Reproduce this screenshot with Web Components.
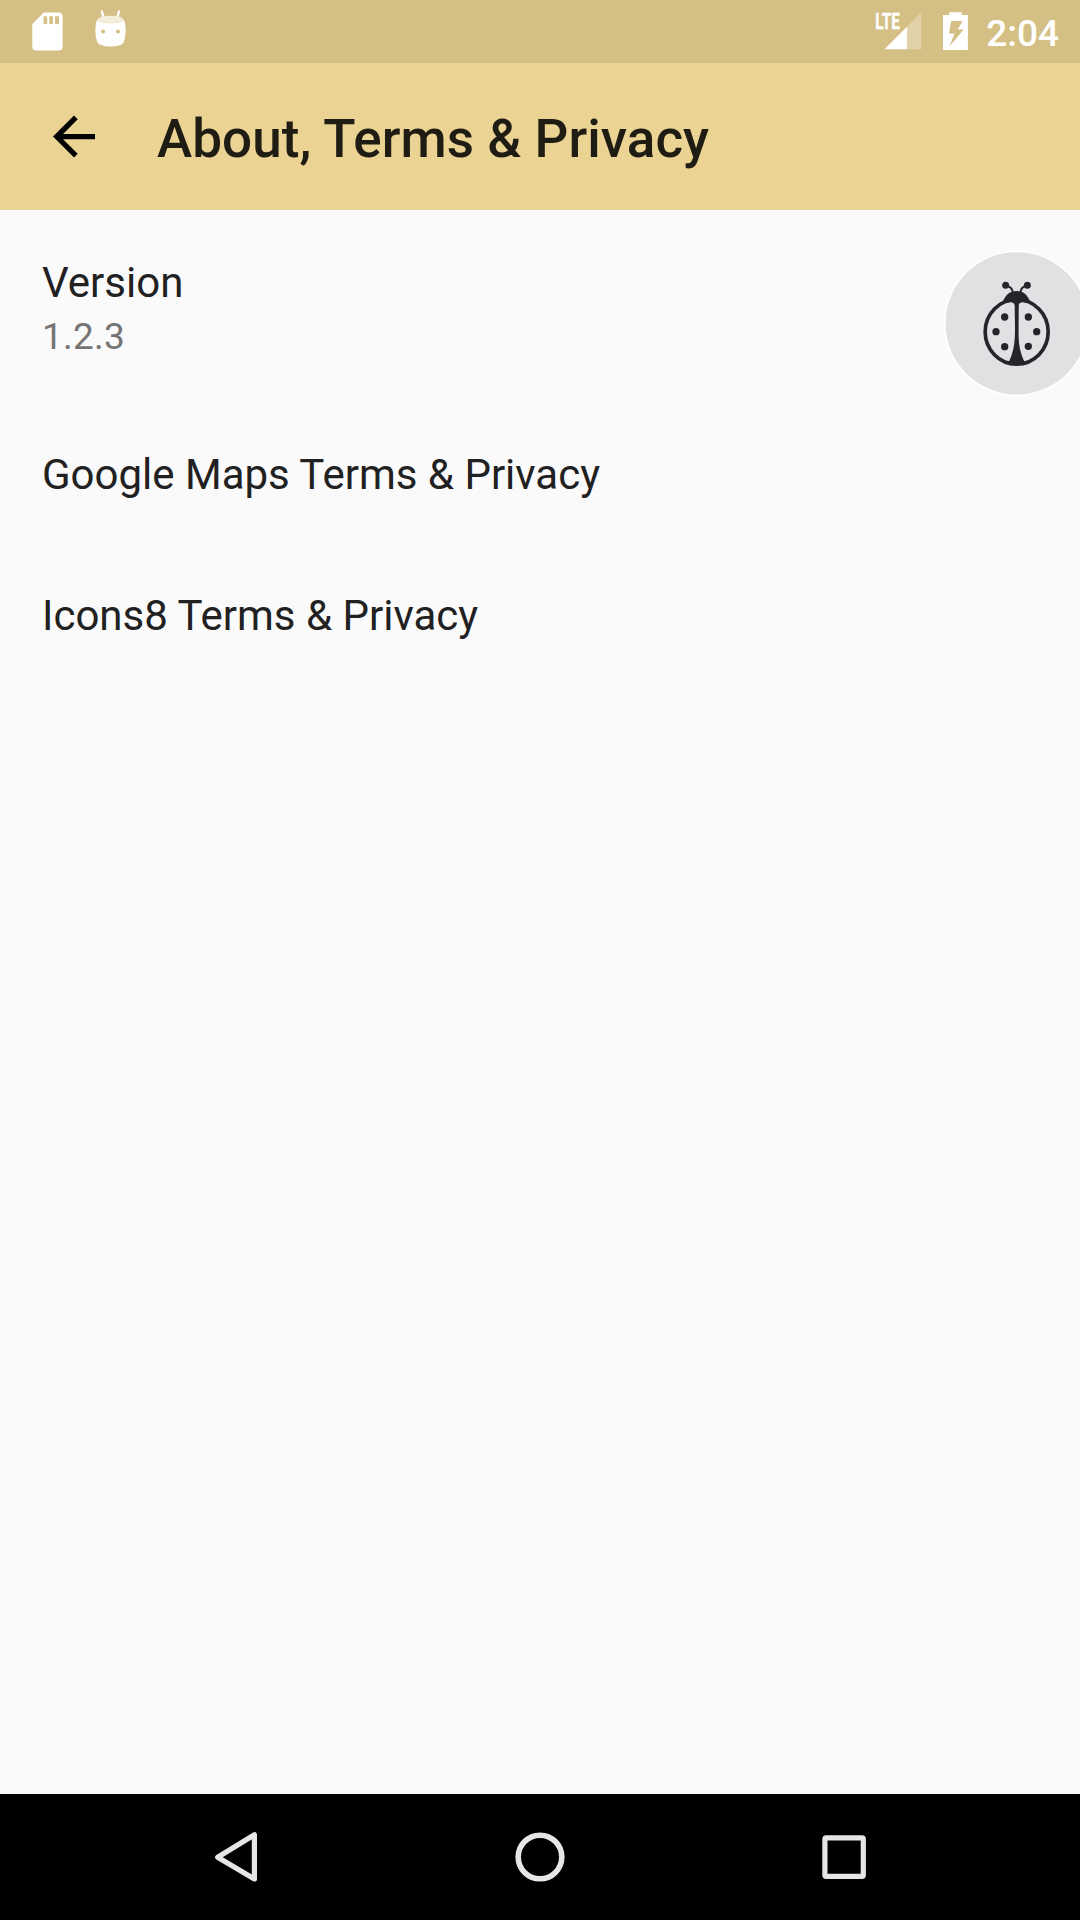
<!DOCTYPE html>
<html lang="en">
<head>
<meta charset="utf-8">
<title>About, Terms &amp; Privacy</title>
<style>
html, body { margin: 0; height: 100%; }
body { font-family: Roboto, "Noto Sans", sans-serif; background: #fafafa; overflow: hidden; }
</style>
</head>
<body>
<app-screen>
  <status-bar slot="status">2:04</status-bar>
  <app-bar slot="bar">About, Terms &amp; Privacy</app-bar>
  <preference-item>Version<span slot="summary">1.2.3</span></preference-item>
  <preference-item>Google Maps Terms &amp; Privacy</preference-item>
  <preference-item>Icons8 Terms &amp; Privacy</preference-item>
  <debug-bubble slot="overlay"></debug-bubble>
  <nav-bar slot="nav"></nav-bar>
</app-screen>
<script>
class Base extends HTMLElement {
  connectedCallback() {
    if (this.shadowRoot) return;
    this.attachShadow({ mode: 'open' }).innerHTML = this.constructor.markup;
  }
}

class AppScreen extends Base {
  static markup = `
    <style>
      :host { display: flex; flex-direction: column; width: 1080px; height: 1920px; position: relative; overflow: hidden; background: #fafafa; }
      main { flex: 1; display: flex; flex-direction: column; padding-top: 6px; }
    </style>
    <slot name="status"></slot>
    <slot name="bar"></slot>
    <main><slot></slot></main>
    <slot name="nav"></slot>
    <slot name="overlay"></slot>`;
}

class StatusBar extends Base {
  static markup = `
    <style>
      :host { display: flex; justify-content: space-between; height: 63px; background: #d4bf84; color: #fff; }
      div { display: flex; align-items: flex-start; }
      svg { display: block; fill: #fff; }
      time { box-sizing: border-box; width: 110px; text-align: right; font-weight: 500; font-size: 37px; line-height: 44px; padding: 12px 21px 0 0; white-space: nowrap; }
    </style>
    <div>
      <svg width="140" height="63" viewBox="0 0 140 63">
        <path fill-rule="evenodd" d="M43.8 12.5H58.8A3.8 3.8 0 0 1 62.6 16.3V46.8A3.8 3.8 0 0 1 58.8 50.6H36.1A3.8 3.8 0 0 1 32.3 46.8V24ZM43.6 16.3V24H47.2V16.3ZM49.3 16.3V24H52.9V16.3ZM55.1 16.3V24H58.9V16.3Z"/>
        <path d="M101.8 11.4L103.8 18.6M119 11.4L117.1 18.6" stroke="#fff" stroke-width="2.2" stroke-linecap="round"/>
        <path fill-rule="evenodd" d="M97.5 19.5C99 24.5 122 24.5 123.6 19.5C126.3 23.5 126.5 36 123.3 43C120.5 47.6 100.5 47.6 97.8 43C94.6 36 94.8 23.5 97.5 19.5ZM103.1 29.4a2 2 0 1 0 .01 4a2 2 0 1 0-.01-4ZM118 29.4a2 2 0 1 0 .01 4a2 2 0 1 0-.01-4Z"/>
        <ellipse cx="110.5" cy="19.5" rx="13" ry="3.7" fill="#f4eddb"/>
      </svg>
    </div>
    <div>
      <svg width="98" height="63" viewBox="872 0 98 63">
        <path d="M921.3 12.5V49.3H884.5Z" fill-opacity=".3"/>
        <path d="M907 26.8V49.3H884.5Z"/>
        <text x="875.2" y="29" font-size="22" font-weight="700" textLength="24.6" lengthAdjust="spacingAndGlyphs" stroke="#fff" stroke-width=".35">LTE</text>
        <path fill-rule="evenodd" d="M949.1 12.3H961.7V14.9H967.9V49.9H943V14.9H949.1ZM951.2 21L949 33.4H954.5L949.6 46.2L963.7 29.5H957.7L962.6 21Z"/>
      </svg>
      <time><slot></slot></time>
    </div>`;
}

class AppBar extends Base {
  static markup = `
    <style>
      :host { display: flex; align-items: center; height: 147px; background: #ebd393; color: #1f1c13; }
      svg { width: 63px; height: 63px; margin: 0 52px 0 42px; display: block; }
      h1 { margin: 0; font-size: 53px; line-height: 62px; font-weight: 500; padding-top: 5px; white-space: nowrap; letter-spacing: .06px; }
    </style>
    <svg viewBox="-.19 0 24 24"><path d="M20 11H7.83l5.59-5.59L12 4l-8 8 8 8 1.41-1.41L7.83 13H20v-2z"/></svg>
    <h1><slot></slot></h1>`;
}

class PreferenceItem extends Base {
  static markup = `
    <style>
      :host { display: flex; flex-direction: column; padding: 42px 42px 49px; color: #212121; }
      .title { font-size: 42px; line-height: 50px; }
      .summary { font-size: 37px; line-height: 44px; color: #757575; letter-spacing: .2px; }
      .summary ::slotted(*) { display: block; padding: 7px 0 0; }
    </style>
    <div class="title"><slot></slot></div>
    <div class="summary"><slot name="summary"></slot></div>`;
}

class DebugBubble extends Base {
  static markup = `
    <style>
      :host { display: block; position: absolute; left: 940px; top: 245px; width: 140px; height: 156px; overflow: hidden; }
      svg { display: block; }
    </style>
    <svg width="140" height="156" viewBox="60 45 420 468">
      <circle cx="290" cy="280" r="219" fill="#fff"/>
      <circle cx="290" cy="280" r="213.5" fill="#e0e1e3"/>
      <g fill="none" stroke="#242529">
        <ellipse cx="290" cy="305.5" rx="94.5" ry="97" stroke-width="11"/>
        <path d="M290 205V400" stroke-width="10"/>
        <path d="M257 167Q276 168 279 188M322 167Q303 168 301 188" stroke-width="6"/>
      </g>
      <g fill="#242529">
        <path d="M249 215C256 195 270 183 290 183S323 195 330 215L320 219C307 215 297 217 296 226L295 300C295 340 300 370 314 396C300 409 280 409 266 396C280 370 285 340 285 300L284 226C283 217 273 215 260 219Z"/>
        <circle cx="257" cy="166" r="10.5"/><circle cx="322" cy="166" r="10.5"/>
        <circle cx="254" cy="261" r="11"/><circle cx="325" cy="261" r="11"/>
        <circle cx="228" cy="305" r="11"/><circle cx="350" cy="305" r="11"/>
        <circle cx="254" cy="350" r="11"/><circle cx="325" cy="349" r="11"/>
      </g>
    </svg>`;
}

class NavBar extends Base {
  static markup = `
    <style>
      :host { display: flex; box-sizing: border-box; padding-right: 1px; justify-content: center; align-items: center; gap: 241px; height: 126px; background: #000; }
      svg { display: block; width: 63px; height: 63px; fill: none; stroke: #e6e6e6; }
    </style>
    <svg viewBox="204 1826 63 63"><path d="M254.4 1834.7V1878.9L217.7 1857.2Z" stroke-width="5.2" stroke-linejoin="round"/></svg>
    <svg viewBox="508 1826 63 63"><circle cx="540" cy="1857" r="21.8" stroke-width="5.6"/></svg>
    <svg viewBox="812 1826 63 63"><rect x="824.9" y="1837.9" width="38.4" height="38.4" rx="1.3" stroke-width="5.2"/></svg>`;
}

customElements.define('app-screen', AppScreen);
customElements.define('status-bar', StatusBar);
customElements.define('app-bar', AppBar);
customElements.define('preference-item', PreferenceItem);
customElements.define('debug-bubble', DebugBubble);
customElements.define('nav-bar', NavBar);
</script>
</body>
</html>
